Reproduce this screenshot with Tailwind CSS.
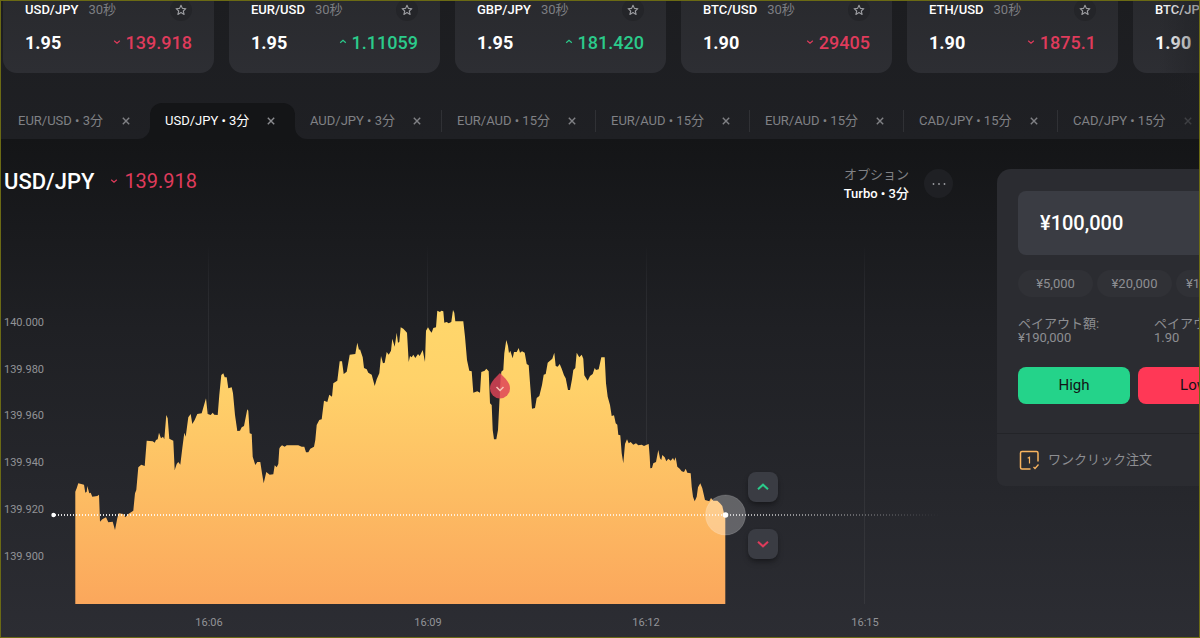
<!DOCTYPE html>
<html lang="ja">
<head>
<meta charset="utf-8">
<meta name="viewport" content="width=device-width, initial-scale=1">
<title>USD/JPY</title>
<script src="https://cdn.jsdelivr.net/npm/@tailwindcss/browser@4"></script>
</head>
<body class="h-screen overflow-hidden bg-[#1f2024] font-['Roboto','Noto_Sans_CJK_JP',sans-serif] text-white">
<svg class="hidden">
  <symbol id="star" viewBox="0 0 12 12"><path d="M6 1.2 7.4 4.4 10.9 4.7 8.3 7 9.1 10.4 6 8.6 2.9 10.4 3.7 7 1.1 4.7 4.6 4.4Z" fill="none" stroke="currentColor" stroke-width="1.1" stroke-linejoin="round"/></symbol>
  <symbol id="down" viewBox="0 0 8 8"><path d="M1.2 2.8 4 5.2 6.8 2.8" fill="none" stroke="currentColor" stroke-width="1.2"/></symbol>
  <symbol id="up" viewBox="0 0 8 8"><path d="M1.2 4.8 4 2.4 6.8 4.8" fill="none" stroke="currentColor" stroke-width="1.2"/></symbol>
  <symbol id="close" viewBox="0 0 8 8"><path d="M.8.8 7.2 7.2M7.2.8.8 7.2" fill="none" stroke="currentColor" stroke-width="1.4"/></symbol>
</svg>
<div class="flex h-full flex-col overflow-hidden border border-[#6b6a14]">
  <header class="relative shrink-0 bg-linear-to-b from-[#1c1d20] to-[#1f2024]">
    <section class="flex gap-[15px] pl-[2px]" aria-label="銘柄">
      <article class="h-[72px] w-[211px] shrink-0 rounded-b-[14px] bg-linear-to-b from-[#292a2e] to-[#2d2e33] px-[22px]">
        <div class="flex h-[18px] items-center text-[13px]"><h2 class="font-medium">USD/JPY</h2><span class="ml-[10px] text-[#7d7e82]">30秒</span><button aria-label="お気に入り" class="ml-auto grid size-[22px] place-items-center rounded-full bg-[#242529] text-[#9b9ca0]"><svg class="size-[12px]"><use href="#star"/></svg></button></div>
        <div class="mt-[11px] flex h-6 items-center text-[18px]"><b class="font-bold">1.95</b><span class="ml-auto flex items-center gap-[5px] font-medium text-[#df3b5b]"><svg class="size-2"><use href="#down"/></svg>139.918</span></div>
      </article>
      <article class="h-[72px] w-[211px] shrink-0 rounded-b-[14px] bg-linear-to-b from-[#292a2e] to-[#2d2e33] px-[22px]">
        <div class="flex h-[18px] items-center text-[13px]"><h2 class="font-medium">EUR/USD</h2><span class="ml-[10px] text-[#7d7e82]">30秒</span><button aria-label="お気に入り" class="ml-auto grid size-[22px] place-items-center rounded-full bg-[#242529] text-[#9b9ca0]"><svg class="size-[12px]"><use href="#star"/></svg></button></div>
        <div class="mt-[11px] flex h-6 items-center text-[18px]"><b class="font-bold">1.95</b><span class="ml-auto flex items-center gap-[5px] font-medium text-[#2bcb8b]"><svg class="size-2"><use href="#up"/></svg>1.11059</span></div>
      </article>
      <article class="h-[72px] w-[211px] shrink-0 rounded-b-[14px] bg-linear-to-b from-[#292a2e] to-[#2d2e33] px-[22px]">
        <div class="flex h-[18px] items-center text-[13px]"><h2 class="font-medium">GBP/JPY</h2><span class="ml-[10px] text-[#7d7e82]">30秒</span><button aria-label="お気に入り" class="ml-auto grid size-[22px] place-items-center rounded-full bg-[#242529] text-[#9b9ca0]"><svg class="size-[12px]"><use href="#star"/></svg></button></div>
        <div class="mt-[11px] flex h-6 items-center text-[18px]"><b class="font-bold">1.95</b><span class="ml-auto flex items-center gap-[5px] font-medium text-[#2bcb8b]"><svg class="size-2"><use href="#up"/></svg>181.420</span></div>
      </article>
      <article class="h-[72px] w-[211px] shrink-0 rounded-b-[14px] bg-linear-to-b from-[#292a2e] to-[#2d2e33] px-[22px]">
        <div class="flex h-[18px] items-center text-[13px]"><h2 class="font-medium">BTC/USD</h2><span class="ml-[10px] text-[#7d7e82]">30秒</span><button aria-label="お気に入り" class="ml-auto grid size-[22px] place-items-center rounded-full bg-[#242529] text-[#9b9ca0]"><svg class="size-[12px]"><use href="#star"/></svg></button></div>
        <div class="mt-[11px] flex h-6 items-center text-[18px]"><b class="font-bold">1.90</b><span class="ml-auto flex items-center gap-[5px] font-medium text-[#df3b5b]"><svg class="size-2"><use href="#down"/></svg>29405</span></div>
      </article>
      <article class="h-[72px] w-[211px] shrink-0 rounded-b-[14px] bg-linear-to-b from-[#292a2e] to-[#2d2e33] px-[22px]">
        <div class="flex h-[18px] items-center text-[13px]"><h2 class="font-medium">ETH/USD</h2><span class="ml-[10px] text-[#7d7e82]">30秒</span><button aria-label="お気に入り" class="ml-auto grid size-[22px] place-items-center rounded-full bg-[#242529] text-[#9b9ca0]"><svg class="size-[12px]"><use href="#star"/></svg></button></div>
        <div class="mt-[11px] flex h-6 items-center text-[18px]"><b class="font-bold">1.90</b><span class="ml-auto flex items-center gap-[5px] font-medium text-[#df3b5b]"><svg class="size-2"><use href="#down"/></svg>1875.1</span></div>
      </article>
      <article class="h-[72px] w-[211px] shrink-0 rounded-b-[14px] bg-linear-to-b from-[#292a2e] to-[#2d2e33] px-[22px]">
        <div class="flex h-[18px] items-center text-[13px]"><h2 class="font-medium">BTC/JPY</h2></div>
        <div class="mt-[11px] flex h-6 items-center text-[18px]"><b class="font-bold">1.90</b></div>
      </article>
    </section>
    <nav class="mt-[30px] flex h-9 pl-[2px] text-[13px] text-[#808185]" aria-label="チャート">
      <div class="flex w-[147px] shrink-0 items-center justify-between pr-5 pb-px pl-[15px]"><a href="#">EUR/USD • 3分</a><button aria-label="閉じる"><svg class="size-2"><use href="#close"/></svg></button></div>
      <div class="relative flex w-[145px] shrink-0 items-center justify-between rounded-t-[12px] bg-[#141517] pr-5 pb-px pl-[15px] text-white">
        <svg class="absolute bottom-0 -left-3 size-3" viewBox="0 0 12 12"><path d="M12 0A12 12 0 0 1 0 12H12Z" fill="#141517"/></svg>
        <svg class="absolute -right-3 bottom-0 size-3" viewBox="0 0 12 12"><path d="M0 0A12 12 0 0 0 12 12H0Z" fill="#141517"/></svg>
        <a href="#" aria-current="page">USD/JPY • 3分</a><button aria-label="閉じる" class="text-[#8b8c90]"><svg class="size-2"><use href="#close"/></svg></button></div>
      <div class="flex w-[146px] shrink-0 items-center justify-between pr-5 pb-px pl-[15px]"><a href="#">AUD/JPY • 3分</a><button aria-label="閉じる"><svg class="size-2"><use href="#close"/></svg></button></div>
      <div class="flex w-[154px] shrink-0 items-center"><i class="h-[22px] w-px bg-[#303135]"></i><div class="flex flex-1 items-center justify-between pr-[19px] pb-px pl-[15px]"><a href="#">EUR/AUD • 15分</a><button aria-label="閉じる"><svg class="size-2"><use href="#close"/></svg></button></div></div>
      <div class="flex w-[154px] shrink-0 items-center"><i class="h-[22px] w-px bg-[#303135]"></i><div class="flex flex-1 items-center justify-between pr-[19px] pb-px pl-[15px]"><a href="#">EUR/AUD • 15分</a><button aria-label="閉じる"><svg class="size-2"><use href="#close"/></svg></button></div></div>
      <div class="flex w-[154px] shrink-0 items-center"><i class="h-[22px] w-px bg-[#303135]"></i><div class="flex flex-1 items-center justify-between pr-[19px] pb-px pl-[15px]"><a href="#">EUR/AUD • 15分</a><button aria-label="閉じる"><svg class="size-2"><use href="#close"/></svg></button></div></div>
      <div class="flex w-[154px] shrink-0 items-center"><i class="h-[22px] w-px bg-[#303135]"></i><div class="flex flex-1 items-center justify-between pr-[19px] pb-px pl-[15px]"><a href="#">CAD/JPY • 15分</a><button aria-label="閉じる"><svg class="size-2"><use href="#close"/></svg></button></div></div>
      <div class="flex w-[154px] shrink-0 items-center"><i class="h-[22px] w-px bg-[#303135]"></i><div class="flex flex-1 items-center justify-between pr-[19px] pb-px pl-[15px]"><a href="#">CAD/JPY • 15分</a><button aria-label="閉じる" class="opacity-50"><svg class="size-2"><use href="#close"/></svg></button></div></div>
    </nav>
    <div class="pointer-events-none absolute inset-y-0 right-0 w-10 bg-linear-to-r from-transparent to-[#1f2024]/50"></div>
  </header>

  <main class="flex flex-1 items-start bg-linear-to-b from-[#141517] via-[#1f2024] via-38% to-[#2c2d33]">
    <section class="min-w-0 flex-1">
      <div class="flex h-[72px] items-start pr-11 pl-[3px]">
        <h1 class="mt-7 text-[22px] leading-[30px] font-medium">USD/JPY</h1>
        <p class="mt-[27px] ml-4 flex items-center gap-[6px] text-[20px] leading-[30px] text-[#df3b5b]"><svg class="size-2"><use href="#down"/></svg>139.918</p>
        <div class="mt-[26px] ml-auto text-right text-[13px] leading-[19px]"><p class="text-[#808185]">オプション</p><p class="font-medium">Turbo • 3分</p></div>
        <button aria-label="メニュー" class="mt-[30px] ml-[15px] grid size-[29px] place-items-center rounded-full bg-[#1f2024] text-[#9b9ca0]"><svg class="h-1 w-4" viewBox="0 0 16 4" fill="currentColor"><circle cx="2.5" cy="2" r=".9"/><circle cx="8" cy="2" r=".9"/><circle cx="13.5" cy="2" r=".9"/></svg></button>
      </div>
      <div class="relative">
        <svg width="996" height="426" viewBox="1 211 996 426" class="block max-w-none font-['Roboto'] text-[11px]" role="img" aria-label="USD/JPY チャート">
          <defs>
            <linearGradient id="area" gradientUnits="userSpaceOnUse" x1="0" y1="310" x2="0" y2="604"><stop offset="0" stop-color="#ffd76b"/><stop offset=".25" stop-color="#ffd26a"/><stop offset="1" stop-color="#fba75c"/></linearGradient>
            <linearGradient id="grid" gradientUnits="userSpaceOnUse" x1="0" y1="245" x2="0" y2="604"><stop offset="0" stop-color="#34353a" stop-opacity="0"/><stop offset=".2" stop-color="#2b2c30"/><stop offset="1" stop-color="#36373c"/></linearGradient>
            <linearGradient id="fade" gradientUnits="userSpaceOnUse" x1="53" y1="0" x2="940" y2="0"><stop offset="0" stop-color="#fff"/><stop offset=".76" stop-color="#fff" stop-opacity=".85"/><stop offset=".9" stop-color="#fff" stop-opacity=".35"/><stop offset="1" stop-color="#fff" stop-opacity="0"/></linearGradient>
          </defs>
          <g fill="url(#grid)"><rect x="208" y="245" width="1" height="359"/><rect x="427" y="245" width="1" height="359"/><rect x="646" y="245" width="1" height="359"/><rect x="864" y="245" width="1" height="359"/></g>
          <path id="series" fill="url(#area)"/>
          <g fill="#929397">
            <text x="4" y="326">140.000</text><text x="4" y="373">139.980</text><text x="4" y="419">139.960</text><text x="4" y="466">139.940</text><text x="4" y="513">139.920</text><text x="4" y="560">139.900</text>
          </g>
          <g fill="#929397" text-anchor="middle"><text x="209" y="626">16:06</text><text x="428" y="626">16:09</text><text x="646" y="626">16:12</text><text x="865" y="626">16:15</text></g>
          <path d="M500 373C494 379 490 383 490 388.500A10 10 0 0 0 510 388.500C510 383 506 379 500 373Z" fill="#e04a58" fill-opacity=".88"/>
          <path d="M500 373C494 379 490 383 490 388.500A10 10 0 0 0 500 398.500Z" fill="#a02c48" fill-opacity=".3"/>
          <path d="M496.500 387 500 390.500 503.500 387" fill="none" stroke="#f6c3b5" stroke-width="1.500"/>
          <circle cx="725.500" cy="515" r="20" fill="#fff" fill-opacity=".28" stroke="#fff" stroke-opacity=".15"/>
          <path d="M55 515H940V514.900" fill="none" stroke="url(#fade)" stroke-width="2" stroke-dasharray="1 2" stroke-opacity=".85"/>
          <circle cx="53.500" cy="515" r="2.200" fill="#fff"/><circle cx="725.500" cy="515" r="2.800" fill="#fff"/>
        </svg>
        <button aria-label="High" class="absolute top-[261px] left-[747px] grid size-[30px] place-items-center rounded-[8px] bg-[#3a3c43] text-[#2bcb8b] shadow-md shadow-black/30"><svg class="size-3" viewBox="0 0 12 12"><path d="M1 8.200 6 3.700 11 8.200" fill="none" stroke="currentColor" stroke-width="2"/></svg></button>
        <button aria-label="Low" class="absolute top-[318px] left-[747px] grid size-[30px] place-items-center rounded-[8px] bg-[#3a3c43] text-[#df3b5b] shadow-md shadow-black/30"><svg class="size-3" viewBox="0 0 12 12"><path d="M1 3.800 6 8.300 11 3.800" fill="none" stroke="currentColor" stroke-width="2"/></svg></button>
      </div>
    </section>

    <aside class="mt-[30px] -mr-[73px] w-[275px] shrink-0 overflow-hidden rounded-t-[14px] rounded-b-[8px] bg-[#2b2c31] text-[13px] text-[#8d8e92]">
      <div class="px-[21px] pt-[22px] pb-[29px]">
        <input aria-label="金額" value="¥100,000" class="block h-16 w-full rounded-[8px] bg-[#3a3c43] px-[22px] text-[20px] font-medium text-white outline-none">
        <div class="mt-[15px] flex gap-1"><button class="h-[27px] w-[75px] shrink-0 rounded-full bg-[#303136]">¥5,000</button><button class="h-[27px] w-[75px] shrink-0 rounded-full bg-[#303136]">¥20,000</button><button class="h-[27px] w-[75px] shrink-0 rounded-full bg-[#303136] pl-[10px] text-left">¥100,000</button></div>
        <dl class="mt-5 grid grid-cols-[136px_1fr] leading-[14px] whitespace-nowrap"><div><dt>ペイアウト額:</dt><dd>¥190,000</dd></div><div><dt>ペイアウト率:</dt><dd>1.90</dd></div></dl>
        <div class="mt-[22px] flex gap-2 text-[15px] text-[#121316]"><button class="h-[37px] w-[112px] rounded-[8px] bg-[#24d38a]">High</button><button class="h-[37px] w-[112px] rounded-[8px] bg-[#ff3856]">Low</button></div>
      </div>
      <div class="flex h-[53px] items-center border-t border-[#232428] px-[21px] pb-px">
        <svg class="mr-2 size-[22px]" viewBox="0 0 22 22" fill="none" stroke="#f9b45f" stroke-width="1.500"><path d="M12.500 20H4Q2.500 20 2.500 18.500V4Q2.500 2.500 4 2.500H18.500Q20 2.500 20 4V12.500"/><path d="M15.500 18 17 19.500 20.500 15.500" stroke-width="1.300"/><path d="M9.700 9.300 11.500 8.300V14.500" stroke-width="1.200"/></svg>
        ワンクリック注文</div>
    </aside>
  </main>
</div>
<script>
// Price series, stored in chunks: each has an origin and points, in thirds of a pixel.
const chunks = [
  [180, 1020, "46,792 46,455 50,445 55,430 72,434 76,458 80,455 82,438 88,460 92,458 97,470 112,468 117,464 120,545 127,538 138,532 145,547 158,545 165,570 172,535 176,520 190,522 196,532 205,522 220,512 225,460 229,450 235,382 244,374 254,378 260,302 278,304 284,308 288,300 293,298 297,278 303,295 309,290 313,298 319,225 323,235 328,296 340,302 344,390 350,372 355,366 361,374 367,325 373,278 377,290 385,232 392,222 397,252 404,240 412,222 425,220 438,175 443,222 452,225 458,218 463,224 473,225 478,165 484,105 490,100 494,112 500,112 505,145 515,142 519,160 525,225 532,273 540,272 545,262 552,258 562,208 565,212 569,280 575,282 578,350 586,375 592,366 601,366 606,400 611,430 619,396 629,404 640,403 644,376 650,382 655,372 658,326"],
  [750, 900, "90,442 96,436 104,440 110,436 145,436 155,440 163,440 168,457 175,457 181,446 192,440 196,420 200,375 208,360 215,358 222,302 232,306 238,284 246,290 250,250 262,242 269,184 276,184 281,222 290,215 299,164 316,162 322,128 327,150 330,148 338,172 342,204 350,208 355,218 365,224 374,258 380,238 388,220 393,168 399,190 404,188 410,156 416,164 423,152 427,116 434,140 440,98 444,128 448,126 452,82 460,86 471,98 476,186 480,168 485,172 490,164 496,174 504,162 509,168 518,150 525,186 528,92 534,82 540,92 545,98 550,84 558,82 562,32 570,36 574,32 580,34 583,68 590,66 596,70 604,66 609,30 613,38 616,64 640,64 645,110 651,180 658,212 665,214 670,278 682,274 690,278 694,216 704,212 709,206 716,214"],
  [1260, 870, "210,340 215,345 218,420 222,448 229,448 234,420 240,300 244,245 250,240 253,190 259,150 264,168 267,190 271,182 278,205 282,186 290,186 296,174 300,188 306,184 314,188 320,222 326,226 331,290 336,356 345,354 350,324 358,318 366,285 371,254 377,252 383,218 390,212 397,206 403,188 407,228 413,230 419,222 425,236 432,256 437,265 444,300 450,300 456,268 460,240 466,234 470,188 478,202 485,194 490,206 493,256 503,272 510,258 518,252 524,234 528,240 536,238 544,202 554,202 558,280 563,320 570,345 575,378 582,376 587,400 592,404 595,434 601,436 605,490 610,520 615,462 621,448 626,460 632,456 640,464 648,460 655,466 665,464 672,468 680,464 686,462 689,500"],
  [1740, 1200, "211,205 216,204 220,190 228,186 235,150 240,175 244,180 247,165 254,172 259,184 265,176 272,182 279,174 283,182 287,172 292,200 299,206 305,214 312,216 317,206 322,218 332,220 335,260 339,290 344,304 350,290 354,262 361,250 367,265 375,300 388,304 393,294 400,302 412,302 420,310 427,318 432,340 436,345 436,612"]
];
const points = chunks.flatMap(([ox, oy, list]) => list.split(" ").map(p => {
  const [x, y] = p.split(",").map(Number);
  return `${((x + ox) / 3).toFixed(1)} ${((y + oy) / 3).toFixed(1)}`;
}));
document.getElementById("series").setAttribute("d", "M" + points.join("L") + "Z");
</script>
</body>
</html>
